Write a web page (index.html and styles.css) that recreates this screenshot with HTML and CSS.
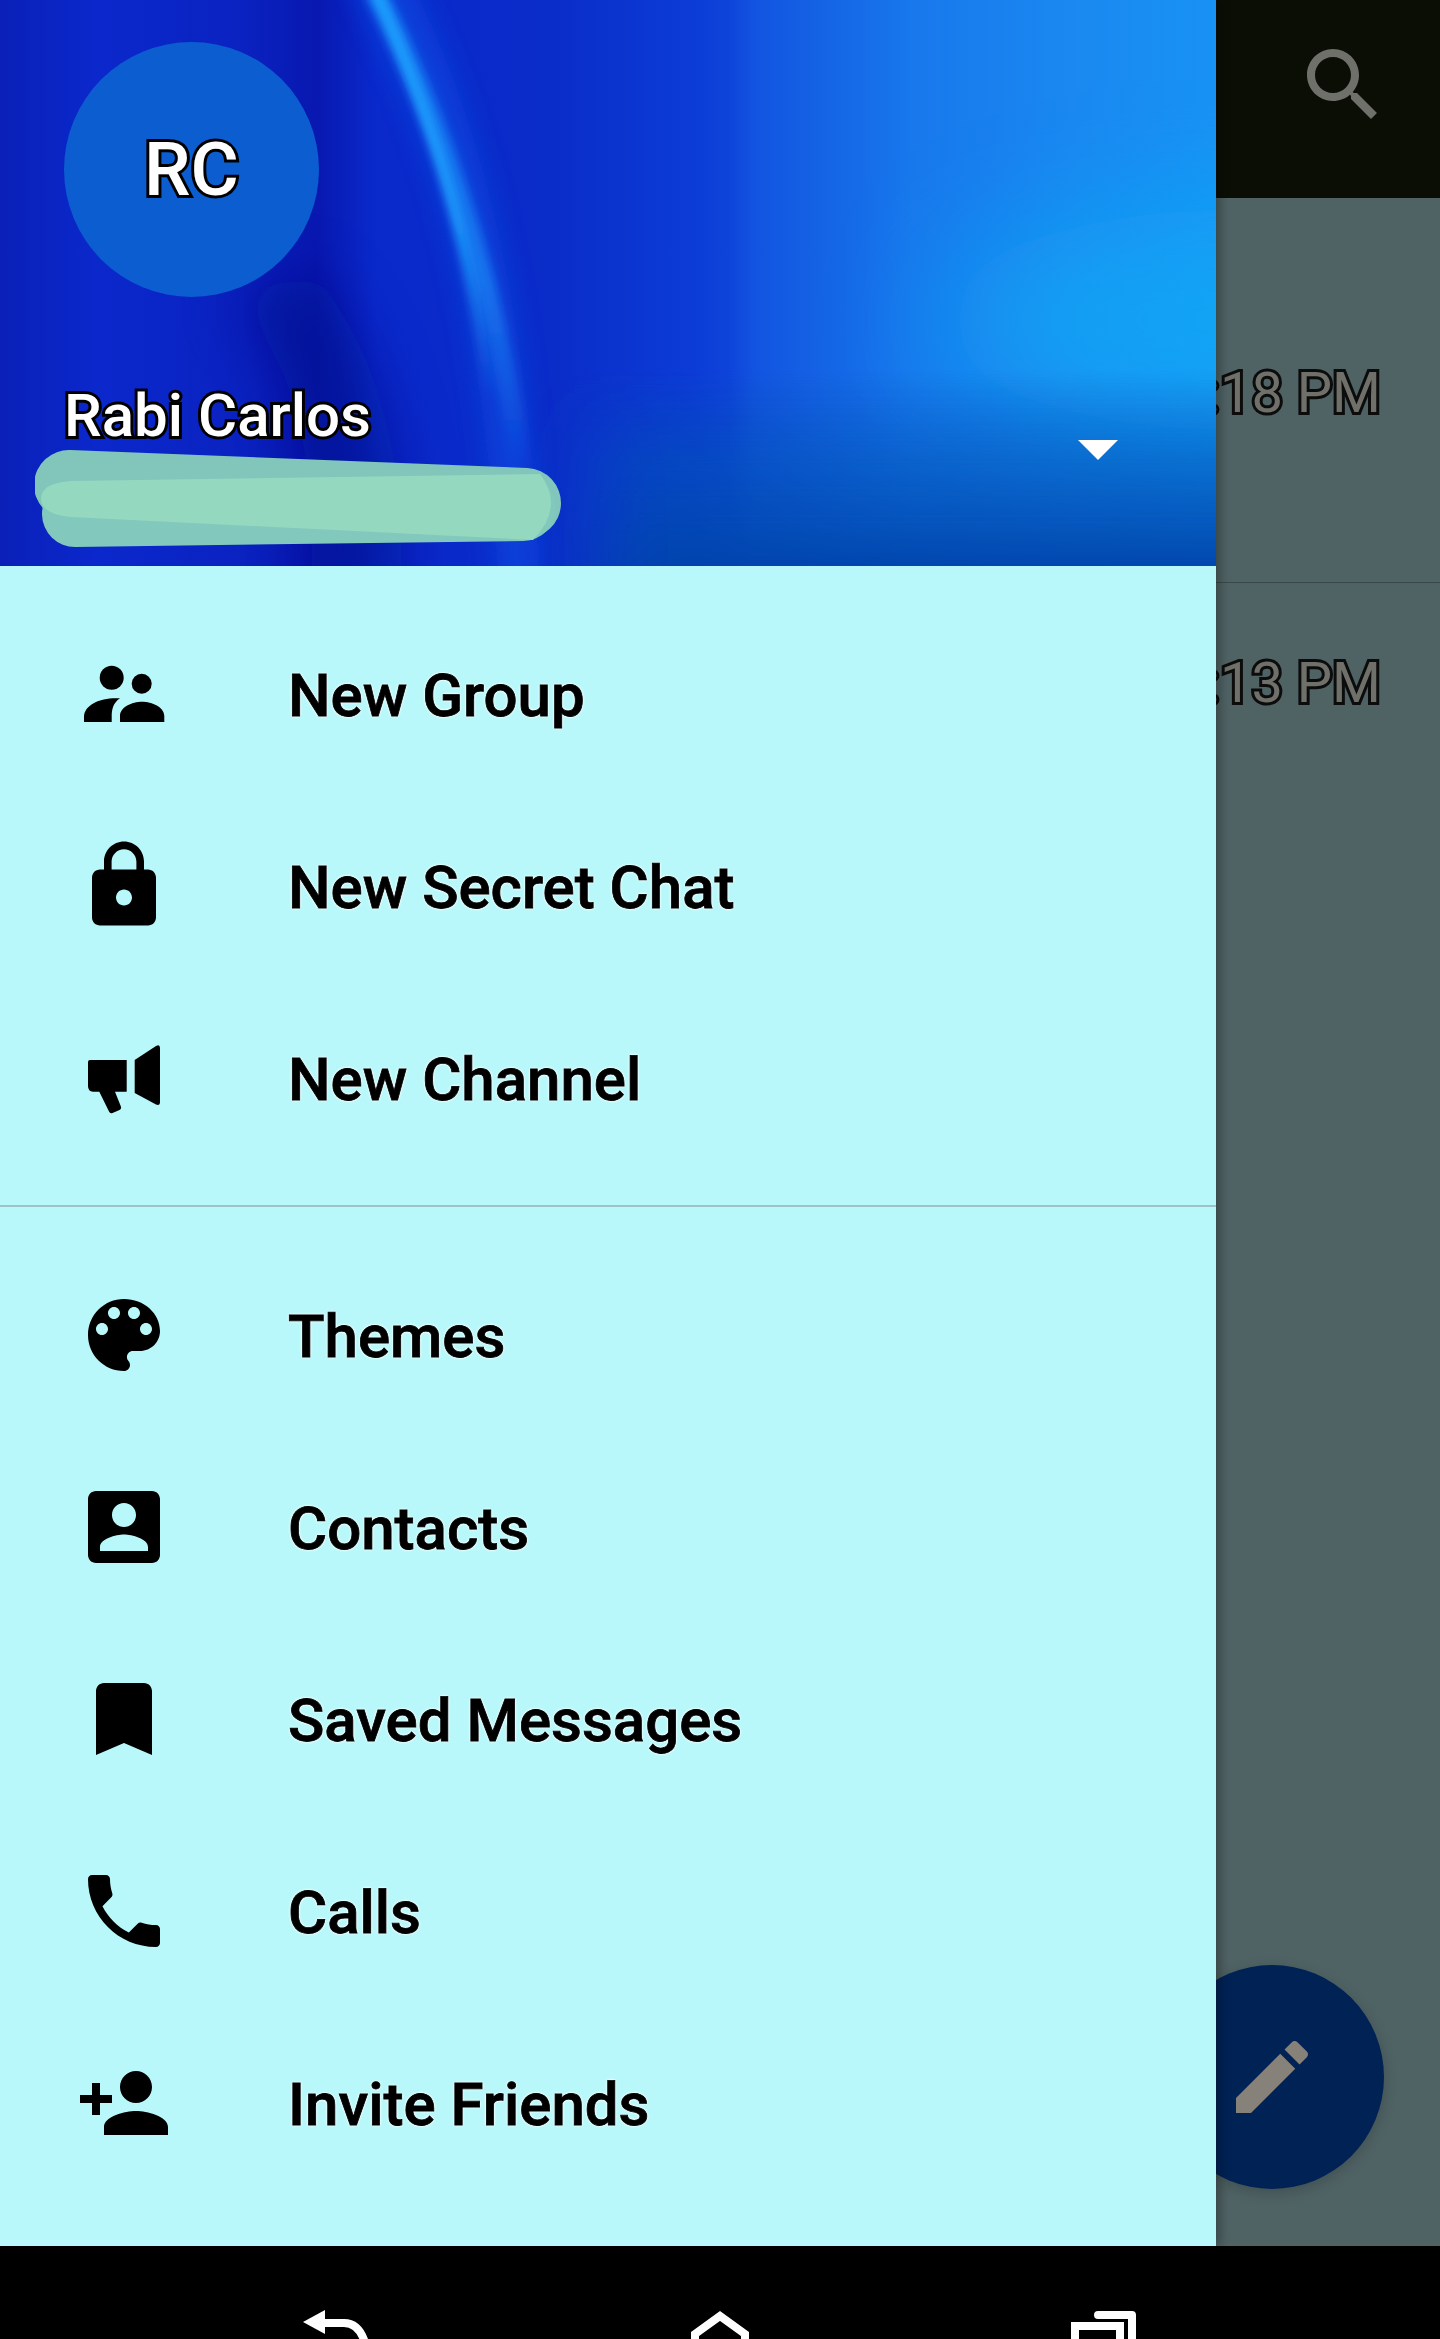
FILE: index.html
```html
<!DOCTYPE html>
<html lang="en">
<head>
<meta charset="utf-8">
<title>Menu</title>
<link rel="stylesheet" href="styles.css">
</head>
<body>
<div class="screen">
  <div class="chats">
    <div class="topbar">
      <svg class="icon96 search" viewBox="0 0 24 24"><path d="M15.5 14h-.79l-.28-.27C15.41 12.59 16 11.11 16 9.5 16 5.91 13.09 3 9.5 3S3 5.91 3 9.5 5.91 16 9.5 16c1.61 0 3.09-.59 4.23-1.57l.27.28v.79l5 4.99L20.49 19l-4.99-5zm-6 0C7.01 14 5 11.99 5 9.5S7.01 5 9.5 5 14 7.01 14 9.5 11.99 14 9.5 14z"/></svg>
    </div>
    <div class="chat-row first"><span class="time">:18 PM</span></div>
    <div class="chat-row second"><span class="time">:13 PM</span></div>
  </div>
  <div class="fab">
    <svg class="icon96 pencil" viewBox="0 0 24 24"><path d="M3 17.25V21h3.75L17.81 9.94l-3.75-3.75L3 17.25zM20.71 7.04c.39-.39.39-1.02 0-1.41l-2.34-2.34c-.39-.39-1.02-.39-1.41 0l-1.83 1.83 3.75 3.75 1.83-1.83z"/></svg>
  </div>
  <aside class="drawer">
    <header class="profile">
      <svg class="wallpaper" viewBox="0 0 1216 566" preserveAspectRatio="none" aria-hidden="true">
        <defs>
          <filter id="b60" x="-80%" y="-80%" width="260%" height="260%"><feGaussianBlur stdDeviation="60"/></filter>
          <filter id="b30" x="-80%" y="-80%" width="260%" height="260%"><feGaussianBlur stdDeviation="30"/></filter>
          <filter id="b12" x="-60%" y="-60%" width="220%" height="220%"><feGaussianBlur stdDeviation="12"/></filter>
          <filter id="b5" x="-60%" y="-60%" width="220%" height="220%"><feGaussianBlur stdDeviation="5"/></filter>
          <filter id="bx" x="-20%" y="-20%" width="140%" height="140%"><feGaussianBlur stdDeviation="40 0"/></filter>
          <linearGradient id="fade" x1="0" y1="0" x2="0" y2="1">
            <stop offset="0" stop-color="#0448b0" stop-opacity="0"/>
            <stop offset="0.45" stop-color="#0450b4" stop-opacity=".55"/>
            <stop offset="1" stop-color="#0444ac" stop-opacity=".97"/>
          </linearGradient>
          <linearGradient id="glow" gradientUnits="userSpaceOnUse" x1="0" y1="0" x2="0" y2="470">
            <stop offset="0" stop-color="#1878f0"/>
            <stop offset="0.6" stop-color="#1878f0" stop-opacity=".9"/>
            <stop offset="1" stop-color="#1878f0" stop-opacity="0"/>
          </linearGradient>
          <linearGradient id="core" gradientUnits="userSpaceOnUse" x1="0" y1="0" x2="0" y2="400">
            <stop offset="0" stop-color="#1ca4ff"/>
            <stop offset="0.55" stop-color="#1ca4ff" stop-opacity=".9"/>
            <stop offset="1" stop-color="#1ca4ff" stop-opacity="0"/>
          </linearGradient>
        </defs>
        <ellipse cx="1240" cy="320" rx="300" ry="110" fill="#10b0f6" filter="url(#b60)" opacity=".6"/>
        <rect x="600" y="370" width="800" height="200" fill="url(#fade)" filter="url(#bx)"/>
        <path d="M230 300 C290 350 320 440 310 620 L400 620 C410 470 380 350 310 270 Z" fill="#040c88" filter="url(#b30)" opacity=".6"/>
        <path d="M350 -20 C420 120 480 260 500 600 L540 600 C530 300 480 120 410 -20 Z" fill="#0c48e0" filter="url(#b12)" opacity=".7"/>
        <path d="M375 -10 C430 100 490 250 522 470" fill="none" stroke="url(#glow)" stroke-width="20" filter="url(#b5)"/>
        <path d="M375 -10 C425 100 470 230 490 400" fill="none" stroke="url(#core)" stroke-width="10" filter="url(#b5)"/>
      </svg>
      <div class="avatar"><span class="initials">RC</span></div>
      <div class="name">Rabi Carlos</div>
      <svg class="scribble" viewBox="0 0 600 140" aria-hidden="true">
        <path class="line-a" d="M34 36 L491 54"/>
        <path class="line-b" d="M40 65 L488 59"/>
        <path class="line-c" d="M36 32 L505 25 Q530 58 498 91 L36 68 Q6 65 6 50 Q6 34 36 32Z"/>
      </svg>
      <div class="caret"></div>
    </header>
    <nav class="menu">
      <div class="group first-group">
        <div class="row">
          <svg class="icon96" viewBox="0 0 96 96"><circle cx="35.7" cy="33.7" r="12"/><circle cx="65.7" cy="39.7" r="10"/><path d="M8 78v-5C8 60 26 53 44 54.3 37 59 35.7 66 35.7 72v6zM44 78v-6c0-9 12-14.3 22-14.3S88.3 63 88.3 72v6z"/></svg>
          <span class="label">New Group</span>
        </div>
        <div class="row">
          <svg class="icon96" viewBox="0 -0.4 24 24"><path d="M18 8h-1V6c0-2.76-2.24-5-5-5S7 3.24 7 6v2H6c-1.1 0-2 .9-2 2v10c0 1.1.9 2 2 2h12c1.1 0 2-.9 2-2V10c0-1.1-.9-2-2-2zm-6 9c-1.1 0-2-.9-2-2s.9-2 2-2 2 .9 2 2-.9 2-2 2zm3.1-9H8.9V6c0-1.71 1.39-3.1 3.1-3.1 1.71 0 3.1 1.39 3.1 3.1v2z"/></svg>
          <span class="label">New Secret Chat</span>
        </div>
        <div class="row">
          <svg class="icon96" viewBox="0 0 96 96"><path d="M14 32h36.700v31.700H39l5.700 14.300q1.300 2.500-1.200 4L36.500 85q-2.500 1-3.500-1.500L23.300 63.700H17q-5 0-5-5.700V34q0-2 2-2z"/><path d="M58.700 32 80 18q4-2 4 2v54q0 4-4 2.600L58.700 65z"/></svg>
          <span class="label">New Channel</span>
        </div>
      </div>
      <div class="divider"></div>
      <div class="group second-group">
        <div class="row">
          <svg class="icon96" viewBox="0 0 24 24"><path d="M12 3c-4.970 0-9 4.030-9 9s4.030 9 9 9c.83 0 1.500-.67 1.500-1.500 0-.39-.15-.74-.39-1.010-.23-.26-.38-.61-.38-.99 0-.83.67-1.500 1.500-1.500H16c2.760 0 5-2.240 5-5 0-4.420-4.030-8-9-8zm-5.500 9c-.83 0-1.500-.67-1.500-1.500S5.670 9 6.500 9 8 9.670 8 10.500 7.330 12 6.500 12zm3-4C8.670 8 8 7.330 8 6.500S8.670 5 9.500 5s1.500.67 1.500 1.500S10.330 8 9.500 8zm5 0c-.83 0-1.500-.67-1.500-1.500S13.670 5 14.500 5s1.500.67 1.500 1.500S15.330 8 14.500 8zm3 4c-.83 0-1.500-.67-1.500-1.500S16.670 9 17.500 9s1.500.67 1.500 1.500-.67 1.500-1.500 1.500z"/></svg>
          <span class="label">Themes</span>
        </div>
        <div class="row">
          <svg class="icon96" viewBox="0 0 24 24"><path d="M3 5v14c0 1.100.89 2 2 2h14c1.100 0 2-.9 2-2V5c0-1.100-.9-2-2-2H5c-1.110 0-2 .9-2 2zm12 4c0 1.660-1.340 3-3 3s-3-1.340-3-3 1.340-3 3-3 3 1.340 3 3zm-9 8c0-2 4-3.100 6-3.100s6 1.100 6 3.100v1H6v-1z"/></svg>
          <span class="label">Contacts</span>
        </div>
        <div class="row">
          <svg class="icon96" viewBox="0 0 24 24"><path d="M17 3H7c-1.100 0-2 .9-2 2v16l7-3 7 3V5c0-1.100-.9-2-2-2z"/></svg>
          <span class="label">Saved Messages</span>
        </div>
        <div class="row">
          <svg class="icon96" viewBox="0 0 24 24"><path d="M6.620 10.790c1.440 2.830 3.760 5.140 6.590 6.590l2.200-2.200c.27-.27.67-.36 1.020-.24 1.120.37 2.330.57 3.570.57.55 0 1 .45 1 1V20c0 .55-.45 1-1 1-9.390 0-17-7.610-17-17 0-.55.45-1 1-1h3.500c.55 0 1 .45 1 1 0 1.250.2 2.450.57 3.570.11.35.03.74-.25 1.020l-2.200 2.200z"/></svg>
          <span class="label">Calls</span>
        </div>
        <div class="row">
          <svg class="icon96" viewBox="0 0 24 24"><path d="M15 12c2.210 0 4-1.790 4-4s-1.790-4-4-4-4 1.790-4 4 1.790 4 4 4zm-9-2V7H4v3H1v2h3v3h2v-3h3v-2H6zm9 4c-2.670 0-8 1.340-8 4v2h16v-2c0-2.660-5.330-4-8-4z"/></svg>
          <span class="label">Invite Friends</span>
        </div>
      </div>
    </nav>
  </aside>
</div>
<footer class="navbar">
  <div class="nav-button">
    <svg class="nav-icon" viewBox="0 0 96 96"><path class="nav-fill" d="M15 26 37 14V38z"/><path d="M34 27H56Q72 27 78 50"/></svg>
  </div>
  <div class="nav-button">
    <svg class="nav-icon" viewBox="0 0 96 96"><path d="M23 70V38L48 20 73 38V70"/></svg>
  </div>
  <div class="nav-button">
    <svg class="nav-icon" viewBox="0 0 96 96"><path d="M19 70V30H64V70"/><path class="round" d="M42 19H76V60"/></svg>
  </div>
</footer>
</body>
</html>
```
FILE: styles.css
```css
* { box-sizing: border-box; }
html, body { margin: 0; padding: 0; background: #000; }
body {
  width: 1440px;
  height: 2339px;
  overflow: hidden;
  font-family: Roboto, "Liberation Sans", sans-serif;
}

.screen {
  position: relative;
  height: 2246px;
  overflow: hidden;
  background: #4f6264;
}

.icon96 { display: block; width: 96px; height: 96px; flex: none; fill: #000; }

/* dimmed chat list behind the drawer */
.topbar {
  height: 198px;
  background: #0a0e05;
  display: flex;
  justify-content: flex-end;
  padding: 37px 49px 0 0;
}
.search { fill: #6f706a; }
.chat-row {
  display: flex;
  align-items: center;
  justify-content: flex-end;
  padding-right: 59px;
}
.chat-row.first { height: 385px; border-bottom: 1px solid #39494b; }
.chat-row.second { height: 200px; }
.time {
  font-size: 56px;
  line-height: 1;
  color: #6f706a;
  -webkit-text-stroke: 6px #0c0c0c;
  paint-order: stroke fill;
}
.first .time { padding-top: 6px; }

.fab {
  position: absolute;
  right: 56px;
  bottom: 57px;
  width: 224px;
  height: 224px;
  border-radius: 50%;
  background: #002255;
  box-shadow: 0 4px 14px rgba(0, 0, 0, .18);
  display: flex;
  align-items: center;
  justify-content: center;
}
.pencil { fill: #86827a; }

/* drawer */
.drawer {
  position: absolute;
  left: 0;
  top: 0;
  bottom: 0;
  width: 1216px;
  background: #b9f8fa;
  box-shadow: 4px 0 10px rgba(0, 0, 0, .3);
}

.profile {
  position: relative;
  height: 566px;
  padding: 42px 0 0 64px;
  overflow: hidden;
  background: linear-gradient(90deg,
    #0a20b8 0%, #0b28cc 8%, #0a22c0 20%, #0818b0 26%, #0a2acc 31%,
    #0a2cc8 45%, #0c3cd6 57%, #0e44da 60%, #1254e0 62%, #1878ec 75%, #1a88f0 88%, #1892f4 100%);
}
.wallpaper {
  position: absolute;
  left: 0;
  top: 0;
  width: 100%;
  height: 100%;
}
.avatar {
  position: relative;
  width: 255px;
  height: 255px;
  border-radius: 50%;
  background: #0b5dd0;
  display: flex;
  align-items: center;
  justify-content: center;
}
.initials {
  font-size: 74px;
  font-weight: 500;
  line-height: 1;
  color: #fff;
  -webkit-text-stroke: 6px #000;
  paint-order: stroke fill;
}
.name {
  position: relative;
  margin-top: 88px;
  font-size: 60px;
  font-weight: 500;
  line-height: 62px;
  color: #fff;
  -webkit-text-stroke: 6px #000;
  paint-order: stroke fill;
}
.scribble {
  position: absolute;
  left: 35px;
  top: 449px;
  width: 600px;
  height: 140px;
}
.line-a, .line-b { fill: none; stroke-linecap: round; }
.line-a { stroke: #82c6bb; stroke-width: 70px; }
.line-b { stroke: #82c8bc; stroke-width: 66px; }
.line-c { fill: #94d8c0; }
.caret {
  position: absolute;
  left: 1078px;
  top: 440px;
  width: 0;
  height: 0;
  border-left: 20px solid transparent;
  border-right: 20px solid transparent;
  border-top: 20px solid #fff;
}

.group { display: flex; flex-direction: column; }
.first-group { padding-top: 30px; }
.row {
  height: 192px;
  display: flex;
  align-items: center;
  padding-left: 76px;
  gap: 116px;
}
.label {
  font-size: 60px;
  font-weight: 500;
  line-height: 64px;
  padding-top: 7px;
  color: #000;
  -webkit-text-stroke: 0.8px #000;
  text-shadow: 0 0 3px #fff, 0 0 3px #fff, 0 0 2px #fff;
}
.second-group .label { padding-top: 4px; }
.divider {
  height: 2px;
  margin: 33px 0 32px;
  background: #9cc4c6;
}

/* system navigation bar, cropped at the bottom of the shot */
.navbar {
  height: 93px;
  overflow: hidden;
  background: #000;
  display: flex;
  justify-content: center;
  padding-top: 50px;
}
.nav-button { width: 384px; display: flex; justify-content: center; }
.nav-icon {
  display: block;
  width: 96px;
  height: 96px;
  flex: none;
  fill: none;
  stroke: #fff;
  stroke-width: 8px;
}
.nav-fill { fill: #fff; stroke: none; }
.round { stroke-linecap: round; stroke-linejoin: round; }
```
